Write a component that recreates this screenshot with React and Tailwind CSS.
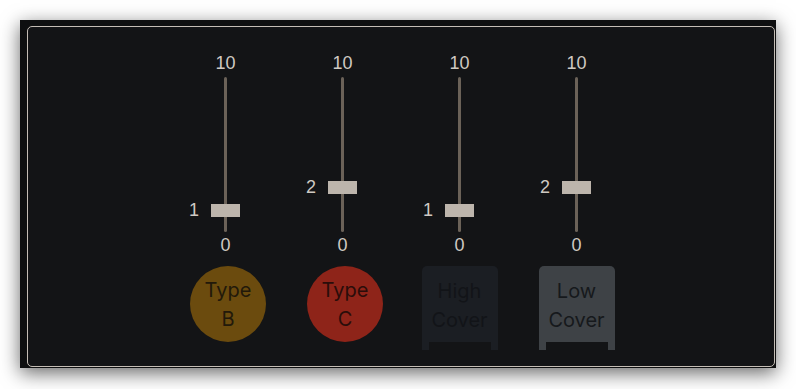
import React from "react";

const cols = [
  { value: "1", thumbTop: 127, kind: "circle", bg: "bg-[#6b4b0e]", fg: "text-[#22190a]", l1: "Type", l2: "B" },
  { value: "2", thumbTop: 104, kind: "circle", bg: "bg-[#8e2419]", fg: "text-[#2a0d0a]", l1: "Type", l2: "C" },
  { value: "1", thumbTop: 127, kind: "cover", bg: "bg-[#1b1e23]", fg: "text-[#121418]", l1: "High", l2: "Cover" },
  { value: "2", thumbTop: 104, kind: "cover", bg: "bg-[#3e4246]", fg: "text-[#16191c]", l1: "Low", l2: "Cover" },
];

function Button({ c }) {
  if (c.kind === "circle") {
    return (
      <div className={`ml-[5px] w-[76px] h-[76px] rounded-full ${c.bg} ${c.fg} flex flex-col items-center justify-center text-[20px] leading-[29px] font-['Inter',sans-serif] pt-[1px]`}>
        <span>{c.l1}</span>
        <span>{c.l2}</span>
      </div>
    );
  }
  return (
    <div className="w-[76px] h-[84px] flex flex-col">
      <div className={`h-[76px] rounded-t-[5px] ${c.bg} ${c.fg} flex flex-col items-center justify-center text-[20px] leading-[29px] font-['Inter',sans-serif] pt-[4px]`}>
        <span>{c.l1}</span>
        <span>{c.l2}</span>
      </div>
      <div className="h-[8px] flex justify-between">
        <div className={`w-[7px] h-full ${c.bg}`} />
        <div className={`w-[7px] h-full ${c.bg}`} />
      </div>
    </div>
  );
}

function Column({ c }) {
  return (
    <div className="w-[117px] flex flex-col items-center">
      <div className="h-[20px] leading-[20px] text-[18px] text-[#cfc9c2] font-['Liberation_Sans',sans-serif]">10</div>
      <div className="relative w-[29px] h-[155px] mt-[4px]">
        <div className="absolute left-[13px] top-0 w-[3px] h-[155px] rounded-full bg-[#6b6258]" />
        <div
          className="absolute left-0 w-[29px] h-[13px] bg-[#bdb5ac]"
          style={{ top: c.thumbTop }}
        />
        <div
          className="absolute right-[41px] h-[13px] leading-[13px] text-[18px] text-[#cfc9c2] font-['Liberation_Sans',sans-serif]"
          style={{ top: c.thumbTop }}
        >
          {c.value}
        </div>
      </div>
      <div className="h-[20px] leading-[20px] text-[18px] text-[#cfc9c2] font-['Liberation_Sans',sans-serif] mt-[3px]">0</div>
      <div className="mt-[11px]">
        <Button c={c} />
      </div>
    </div>
  );
}

export default function App() {
  return (
    <div className="w-[796px] h-[389px] bg-white pt-[20px] pl-[20px]">
      <div className="w-[756px] h-[348px] bg-[#0e0f10] shadow-[0_5px_18px_rgba(0,0,0,0.6)] pl-[7px] pt-[6px]">
        <div className="w-[748px] h-[341px] rounded-[5px] border border-[#c4bdb5] bg-[#131416] flex justify-center pt-[26px]">
          {cols.map((c, i) => (
            <Column key={i} c={c} />
          ))}
        </div>
      </div>
    </div>
  );
}
